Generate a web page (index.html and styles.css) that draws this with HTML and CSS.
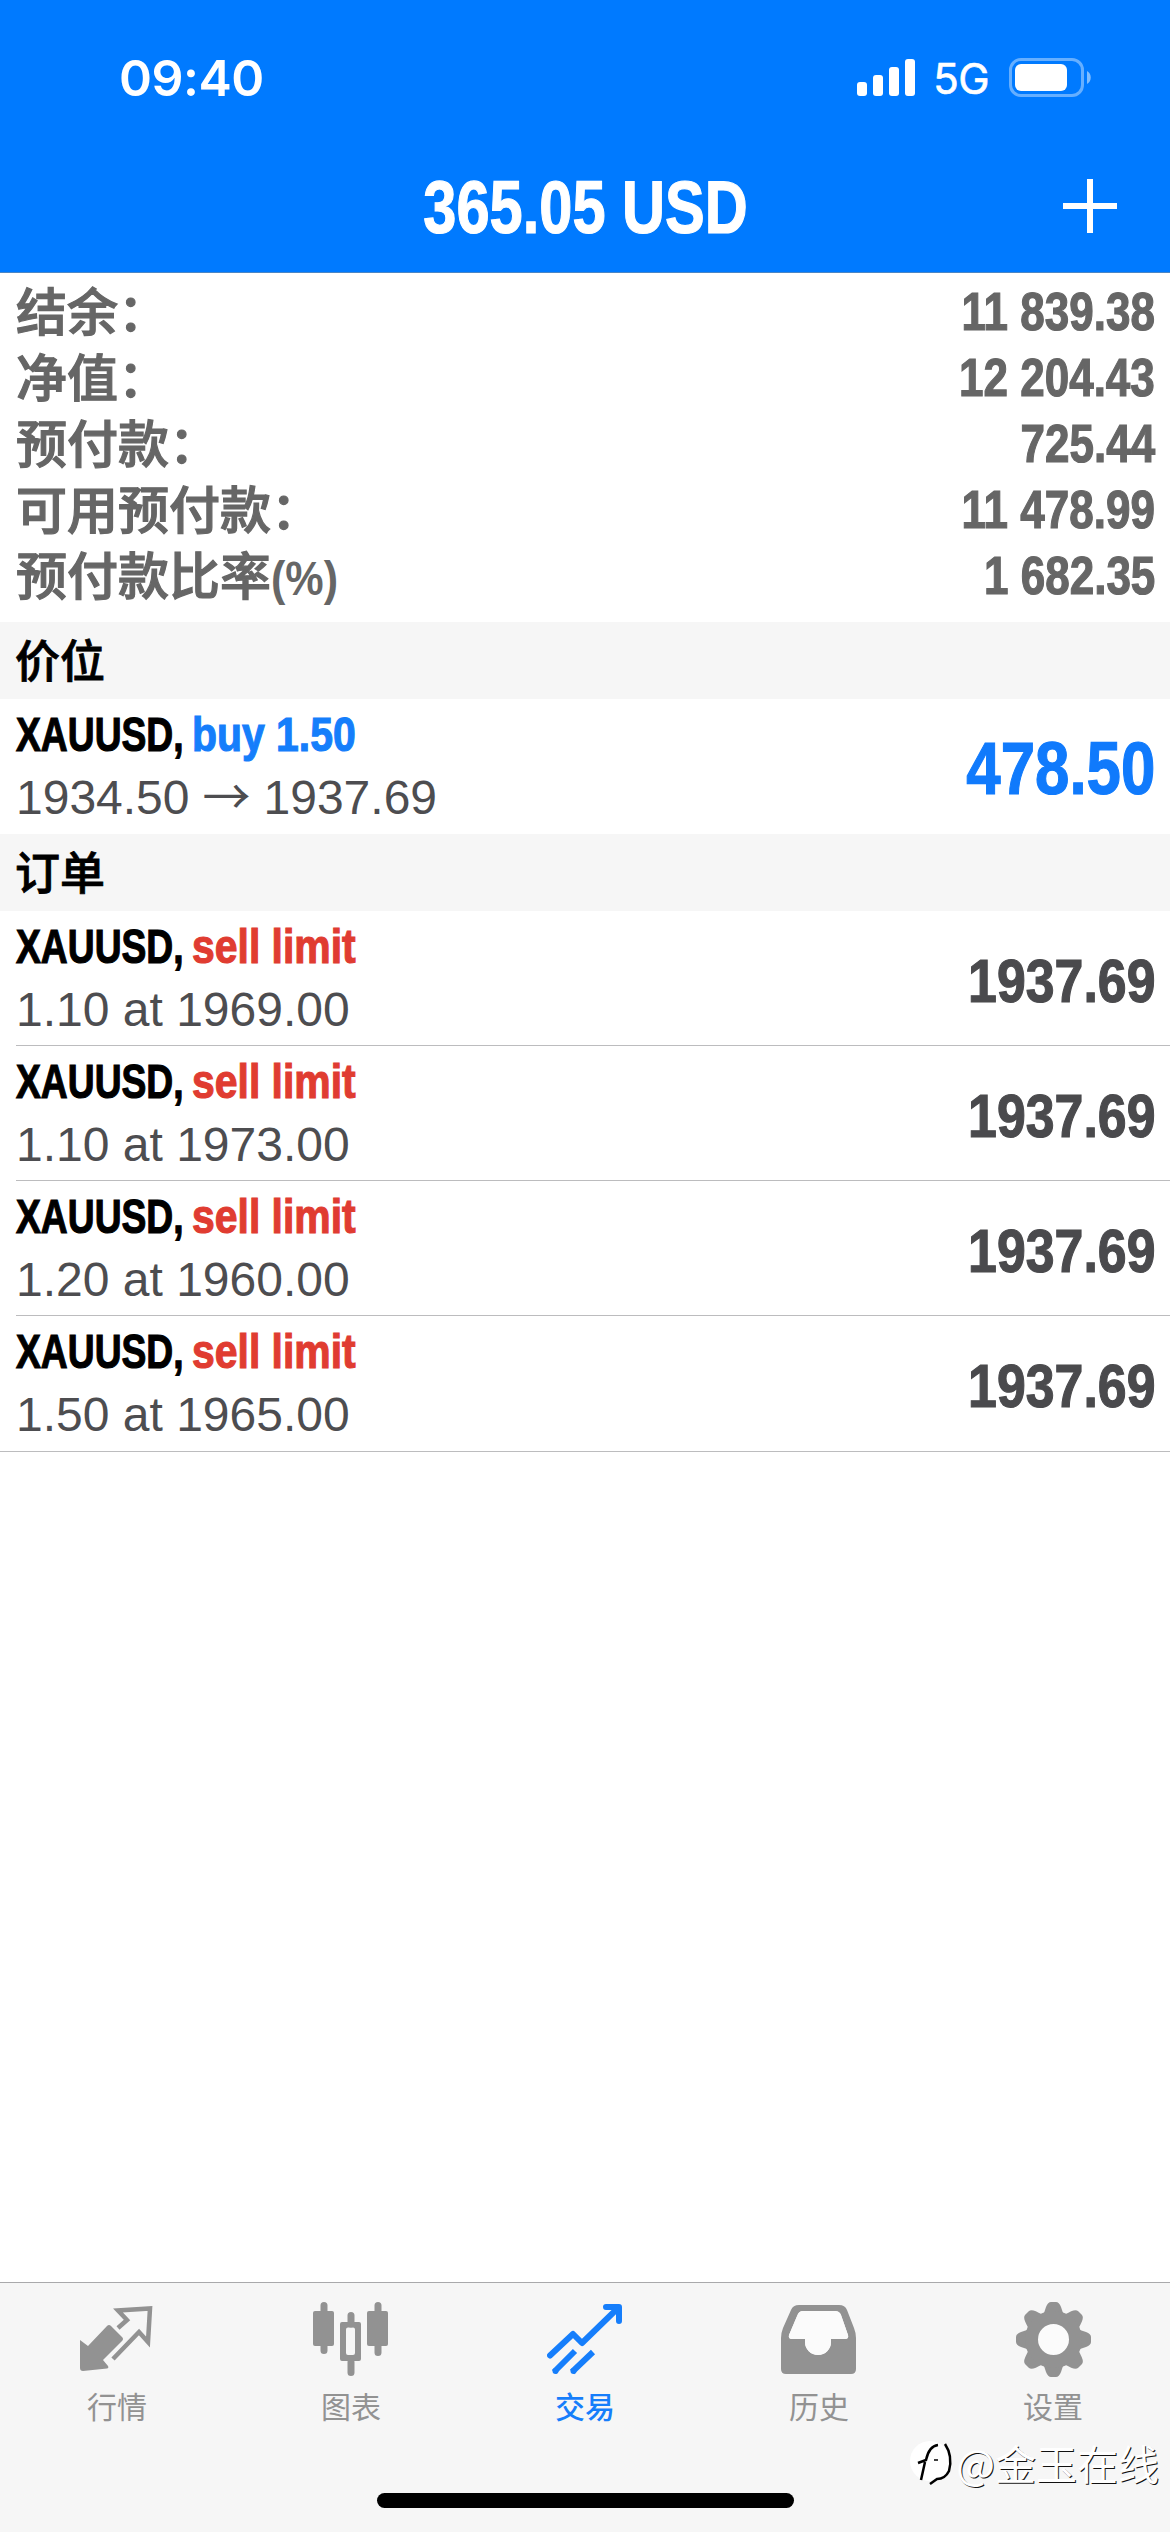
FILE: index.html
```html
<!DOCTYPE html>
<html lang="zh-CN">
<head>
    <meta charset="UTF-8">
    <meta name="viewport" content="width=device-width, initial-scale=1.0">
    <title>交易</title>
    <link rel="stylesheet" href="styles.css">
</head>
<body>
    <header class="header">
        <div class="status-bar">
            <span class="time">09:40</span>
            <div class="status-icons">
                <svg class="signal" width="58" height="38" viewBox="0 0 58 38" fill="#fff">
                    <rect x="0" y="23" width="10" height="14" rx="3"/>
                    <rect x="16" y="16" width="10" height="21" rx="3"/>
                    <rect x="32" y="8" width="10" height="29" rx="3"/>
                    <rect x="48" y="0" width="10" height="37" rx="3"/>
                </svg>
                <span class="network">5G</span>
                <svg class="battery" width="84" height="40" viewBox="0 0 84 40">
                    <rect x="1.500" y="1.500" width="72" height="36" rx="10.500" fill="none" stroke="#fff" stroke-opacity=".4" stroke-width="3"/>
                    <rect x="6" y="6" width="52" height="27" rx="6" fill="#fff"/>
                    <path d="M78 13c5 2.500 5 10.500 0 13z" fill="#fff" fill-opacity=".5"/>
                </svg>
            </div>
        </div>
        <div class="nav-bar">
            <h1 class="title"><span>365.05 USD</span></h1>
            <svg class="add" width="54" height="54" viewBox="0 0 54 54">
                <path d="M27 0v54M0 27h54" stroke="#fff" stroke-width="6"/>
            </svg>
        </div>
    </header>

    <main>
        <dl class="summary">
            <div class="summary-row"><dt>结余：</dt><dd>11 839.38</dd></div>
            <div class="summary-row"><dt>净值：</dt><dd>12 204.43</dd></div>
            <div class="summary-row"><dt>预付款：</dt><dd>725.44</dd></div>
            <div class="summary-row"><dt>可用预付款：</dt><dd>11 478.99</dd></div>
            <div class="summary-row"><dt>预付款比率<span class="percent">(%)</span></dt><dd>1 682.35</dd></div>
        </dl>

        <h2 class="section-title">价位</h2>
        <div class="row position">
            <div class="info">
                <div class="order"><span class="symbol">XAUUSD,</span><span class="side buy">buy 1.50</span></div>
                <div class="detail">1934.50<span class="arrow">→</span>1937.69</div>
            </div>
            <div class="price profit">478.50</div>
        </div>

        <h2 class="section-title">订单</h2>
        <div class="orders">
            <div class="row">
                <div class="info">
                    <div class="order"><span class="symbol">XAUUSD,</span><span class="side sell">sell limit</span></div>
                    <div class="detail">1.10 at 1969.00</div>
                </div>
                <div class="price">1937.69</div>
            </div>
            <div class="row">
                <div class="info">
                    <div class="order"><span class="symbol">XAUUSD,</span><span class="side sell">sell limit</span></div>
                    <div class="detail">1.10 at 1973.00</div>
                </div>
                <div class="price">1937.69</div>
            </div>
            <div class="row">
                <div class="info">
                    <div class="order"><span class="symbol">XAUUSD,</span><span class="side sell">sell limit</span></div>
                    <div class="detail">1.20 at 1960.00</div>
                </div>
                <div class="price">1937.69</div>
            </div>
            <div class="row">
                <div class="info">
                    <div class="order"><span class="symbol">XAUUSD,</span><span class="side sell">sell limit</span></div>
                    <div class="detail">1.50 at 1965.00</div>
                </div>
                <div class="price">1937.69</div>
            </div>
        </div>
    </main>

    <footer class="tab-bar">
        <nav class="tabs">
            <a class="tab">
                <svg width="76" height="76" viewBox="0 0 76 76">
                    <path fill="currentColor" d="M1 38l8 6 19-20q2-2 4 0l11 11q2 2 0 4L24 58l5 6q1 2-1 2.500L4 69q-3 0-3-3z"/>
                    <path fill="none" stroke="currentColor" stroke-width="4.500" d="M39 26l9-8-9-9.500L71 6.500 69 40l-9-10L34 57"/>
                </svg>
                <span>行情</span>
            </a>
            <a class="tab">
                <svg width="76" height="76" viewBox="0 0 76 76">
                    <g fill="none" stroke="currentColor" stroke-width="7" stroke-linecap="round">
                        <path d="M11 3.500V48.500M65 3.500V50.500M38 13.500V22M38 60v10.500"/>
                    </g>
                    <rect x="0" y="9" width="21" height="35" rx="2" fill="currentColor"/>
                    <rect x="54" y="9" width="21" height="35" rx="2" fill="currentColor"/>
                    <path fill="currentColor" fill-rule="evenodd" d="M29 20h17q2 0 2 2v35q0 2-2 2H29q-2 0-2-2V22q0-2 2-2zM35 25.500q-2 0-2 2V51q0 2 2 2h5q2 0 2-2V27.500q0-2-2-2z"/>
                </svg>
                <span>图表</span>
            </a>
            <a class="tab active">
                <svg width="76" height="76" viewBox="0 0 76 76">
                    <g fill="none" stroke="currentColor" stroke-width="6" stroke-linecap="round" stroke-linejoin="round">
                        <path d="M3 53.500L26 32l9 9L71 6M59 5h13v14"/>
                    </g>
                    <path fill="none" stroke="currentColor" stroke-width="6" d="M7 70L28 49M25 70l21-20"/>
                    <path fill="currentColor" d="M62 4h11v11z"/>
                    <circle cx="8.500" cy="69" r="3" fill="currentColor"/>
                    <circle cx="26.500" cy="69" r="3" fill="currentColor"/>
                </svg>
                <span>交易</span>
            </a>
            <a class="tab">
                <svg width="76" height="76" viewBox="0 0 76 76">
                    <path fill="currentColor" fill-rule="evenodd" d="M18 3h40q6 0 8 5l7 18q2 5 2 10v31q0 5-5 5H5q-5 0-5-5V36q0-5 2-10l8-18q2-5 8-5zM22 9q-4 0-5.500 4L8 33q-1 4 3 4h13v3a13 13 0 0 0 26 0v-3h14q4 0 3-4l-7-20q-1.500-4-6-4z"/>
                    <path fill="#fbfbfb" d="M22 9q-4 0-5.500 4L8 33q-1 4 3 4h13v3a13 13 0 0 0 26 0v-3h14q4 0 3-4l-7-20q-1.500-4-6-4z"/>
                </svg>
                <span>历史</span>
            </a>
            <a class="tab">
                <svg width="76" height="76" viewBox="0 0 76 76">
                    <defs>
                        <path id="tooth" d="M24 14q5-1 6-6l1-3q2-5 5-5h5q3 0 5 5l1 3q1 5 6 6z"/>
                    </defs>
                    <g fill="currentColor">
                        <use href="#tooth"/>
                        <use href="#tooth" transform="rotate(45 38.500 37.500)"/>
                        <use href="#tooth" transform="rotate(90 38.500 37.500)"/>
                        <use href="#tooth" transform="rotate(135 38.500 37.500)"/>
                        <use href="#tooth" transform="rotate(180 38.500 37.500)"/>
                        <use href="#tooth" transform="rotate(225 38.500 37.500)"/>
                        <use href="#tooth" transform="rotate(270 38.500 37.500)"/>
                        <use href="#tooth" transform="rotate(315 38.500 37.500)"/>
                    </g>
                    <circle cx="38.500" cy="37.500" r="22" fill="#fbfbfb" stroke="currentColor" stroke-width="13"/>
                </svg>
                <span>设置</span>
            </a>
        </nav>
        <div class="home-indicator"></div>
        <!-- watermark -->
        <div class="watermark">
            <svg width="46" height="50" viewBox="0 0 46 50">
                <circle cx="20" cy="24" r="20" fill="#fff"/>
                <path d="M11 43l4-18M8 26l8-3q3-14 12-15" fill="none" stroke="#000" stroke-width="2.500"/>
                <path d="M24 23h4" fill="none" stroke="#000" stroke-width="1.500"/>
                <path d="M35 7q8 12 4 27-4 8-12 8l-7 5" fill="none" stroke="#000" stroke-width="2.500"/>
            </svg>
            <span>@金玉在线</span>
        </div>
    </footer>
</body>
</html>
```

FILE: styles.css
```css
html, body {
    margin: 0;
    padding: 0;
    height: 100%;
}

body {
    display: flex;
    flex-direction: column;
    background-color: #fff;
    font-family: "Liberation Sans", "Noto Sans CJK SC", sans-serif;
    overflow: hidden;
}

main {
    flex: 1;
}

/* Header */
.header {
    height: 272px;
    background-color: #007aff;
    border-bottom: 1px solid #4b86c4;
    color: #fff;
}

.status-bar {
    display: flex;
    justify-content: space-between;
    align-items: center;
    height: 156px;
    padding: 0 77px 0 119px;
}

.time {
    font-family: Inter, sans-serif;
    font-size: 50px;
    font-weight: 600;
    letter-spacing: -0.5px;
}

.status-icons {
    display: flex;
    align-items: center;
}

.network {
    margin: 0 20px 0 18px;
    font-family: Inter, sans-serif;
    font-size: 42px;
    letter-spacing: -0.5px;
    -webkit-text-stroke: 0.6px currentColor;
}

.nav-bar {
    display: grid;
    grid-template-columns: 1fr auto 1fr;
    align-items: center;
    height: 104px;
    padding-right: 53px;
}

.title {
    grid-column: 2;
    margin: 0 0 0 54px;
    font-size: 74px;
    line-height: 104px;
}

/* Condensed bold text */
.title span,
.summary dd,
.price,
.symbol,
.side,
.percent {
    display: inline-block;
    font-weight: bold;
    white-space: nowrap;
    -webkit-text-stroke: 1.2px currentColor;
}

.title span {
    transform: scaleX(0.805);
}

.add {
    justify-self: end;
    margin-bottom: 4px;
}

/* Account summary */
.summary {
    margin: 0;
    padding: 6px 15px 13px 16px;
    color: #666;
    font-size: 51px;
    font-weight: 500;
}

.summary-row {
    display: flex;
    justify-content: space-between;
    height: 66px;
    line-height: 66px;
}

.summary dt {
    line-height: 70px;
    -webkit-text-stroke: 1.2px currentColor;
}

.summary dd {
    margin: 0;
    font-size: 53px;
    transform: scaleX(0.83);
    transform-origin: right;
}

.percent {
    font-size: 49px;
    line-height: 60px;
    transform: scaleX(0.88);
    transform-origin: left;
    -webkit-text-stroke: 0;
}

/* Sections */
.section-title {
    box-sizing: border-box;
    height: 77px;
    margin: 0;
    padding-left: 15px;
    background-color: #f6f6f6;
    font-family: "Noto Sans CJK SC", sans-serif;
    font-size: 45px;
    font-weight: 500;
    line-height: 74px;
    -webkit-text-stroke: 0.8px currentColor;
}

.row {
    display: flex;
    justify-content: space-between;
    align-items: center;
    box-sizing: border-box;
    height: 135px;
    padding-right: 15px;
    margin-left: 16px;
}

.position {
    padding-bottom: 2px;
}

.orders .row {
    border-bottom: 1px solid #bcbcbe;
}

.orders .row:last-child {
    height: 136px;
    margin-left: 0;
    padding-left: 16px;
    padding-bottom: 1px;
}

.info {
    font-size: 48px;
    line-height: 63px;
}

.order {
    display: flex;
    font-size: 49px;
}

.symbol {
    width: 176px;
    transform: scaleX(0.76);
    transform-origin: left;
}

.side {
    transform: scaleX(0.835);
    transform-origin: left;
}

.buy {
    color: #157efb;
}

.sell {
    color: #e03c31;
}

.detail {
    height: 63px;
    color: #4d4d50;
}

.arrow {
    display: inline-block;
    width: 74px;
    font-family: "Noto Sans CJK SC", sans-serif;
    line-height: 1;
    text-align: center;
}

.price {
    padding-top: 5px;
    color: #4a4a4d;
    font-size: 61px;
    transform: scaleX(0.85);
    transform-origin: right;
}

.profit {
    color: #107afc;
    font-size: 74px;
    transform: scaleX(0.835);
}

/* Bottom tabs */
.tab-bar {
    position: relative;
    height: 249px;
    border-top: 1px solid #a9a9ab;
    background-color: #f6f6f6;
}

.tabs {
    display: grid;
    grid-template-columns: repeat(5, 1fr);
    padding-top: 19px;
}

.tab {
    display: flex;
    flex-direction: column;
    align-items: center;
    color: #929292;
    font-family: "Noto Sans CJK SC", sans-serif;
    font-size: 30px;
    line-height: 44px;
}

.tab span {
    margin-top: 5px;
}

.active {
    color: #167efb;
}

.active span {
    font-weight: 500;
}

.home-indicator {
    width: 417px;
    height: 15px;
    margin: 66px auto 0;
    border-radius: 8px;
    background-color: #000;
}

.watermark {
    position: absolute;
    right: 11px;
    bottom: 40px;
    display: flex;
    align-items: center;
    color: #fff;
    font-family: "Noto Sans CJK SC", sans-serif;
    font-size: 41px;
    line-height: 60px;
    text-shadow: 1px 1px 0 #111;
}
```
